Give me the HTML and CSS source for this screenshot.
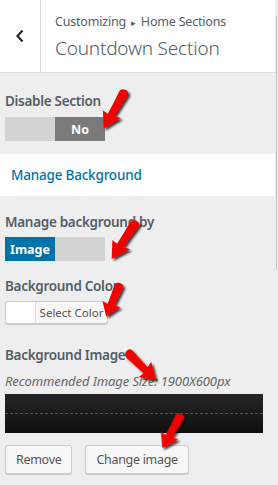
FILE: index.html
```html
<!DOCTYPE html>
<html lang="en">
<head>
  <meta charset="UTF-8">
  <title>Countdown Section</title>
  <link rel="stylesheet" href="styles.css">
</head>
<body>
  <div class="panel">
    <div class="panel-head">
      <button class="back" aria-label="Back">
        <svg width="10" height="14" viewBox="0 0 10 14"><path d="M7.5 1.5 L2.5 7 L7.5 12.5" fill="none" stroke="#23282d" stroke-width="2.2"/></svg>
      </button>
      <div class="head-text">
        <div class="crumb">Customizing <span class="tri">&#9656;</span> Home Sections</div>
        <div class="title">Countdown Section</div>
      </div>
    </div>

    <div class="control first">
      <div class="label">Disable Section</div>
      <div class="switch">
        <span class="half off"></span>
        <span class="half grey">No</span>
      </div>
    </div>

    <div class="band">Manage Background</div>

    <div class="control mb">
      <div class="label">Manage background by</div>
      <div class="switch">
        <span class="half blue">Image</span>
        <span class="half off"></span>
      </div>
    </div>

    <div class="control bc">
      <div class="label">Background Color</div>
      <div class="picker">
        <span class="swatch"></span>
        <span class="pick-text">Select Color</span>
      </div>
    </div>

    <div class="control bi">
      <div class="label">Background Image</div>
      <div class="desc">Recommended Image Size: 1900X600px</div>
      <div class="preview"><div class="dash"></div></div>
      <div class="actions">
        <button class="btn">Remove</button>
        <button class="btn">Change image</button>
      </div>
    </div>
  </div>
  <div class="scroll"><div class="thumb"></div></div>

  <svg class="marks" width="278" height="485" viewBox="0 0 278 485">
    <defs>
      <filter id="shade" x="-50%" y="-50%" width="200%" height="200%">
        <feDropShadow dx="2" dy="2" stdDeviation="1.2" flood-color="#000" flood-opacity="0.75"/>
      </filter>
      <path id="arrow" d="M-4.5 2 C-4.5 -3.5 5 -4 5 1 C4.5 10 4 17 3.8 24.5 L10.5 23 L0.5 40 L-9.5 25 L-3.4 25.8 C-3.5 18 -4 10 -4.5 2 Z"/>
    </defs>
    <g fill="#f40000" filter="url(#shade)">
      <use href="#arrow" transform="translate(124 92) rotate(29.6) scale(0.98 1.05)"/>
      <use href="#arrow" transform="translate(135 223) rotate(33.7) scale(0.98 1.07)"/>
      <use href="#arrow" transform="translate(119 285) rotate(22.8) scale(0.95 0.85)"/>
      <use href="#arrow" transform="translate(128 353) rotate(-45) scale(0.98 0.98)"/>
      <use href="#arrow" transform="translate(180 416) rotate(29.4) scale(0.95 0.92)"/>
    </g>
  </svg>
</body>
</html>
```

FILE: styles.css
```css
* {
  box-sizing: border-box;
}

body {
  margin: 0;
  width: 278px;
  height: 485px;
  overflow: hidden;
  background: #eee;
  font-family: "Noto Sans", "Open Sans", sans-serif;
  color: #555d66;
  display: flex;
  position: relative;
}

.panel {
  width: 275px;
  display: flex;
  flex-direction: column;
}

.panel-head {
  height: 73px;
  background: #fff;
  border-bottom: 1px solid #ddd;
  display: flex;
}

.back {
  width: 41px;
  border: 0;
  border-right: 1px solid #ddd;
  background: #fff;
  padding: 0;
  display: flex;
  align-items: center;
  justify-content: center;
}

.head-text {
  padding: 13px 0 0 14px;
}

.crumb {
  font-size: 12.5px;
  line-height: 18px;
  color: #555d66;
  letter-spacing: -0.2px;
}

.crumb .tri {
  font-size: 9px;
  margin: 0 2px;
}

.title {
  font-size: 19px;
  font-weight: 300;
  line-height: 26px;
  margin-top: 3px;
  color: #555d66;
  letter-spacing: -0.2px;
}

.control {
  padding: 0 5px;
}

.label {
  font-size: 13.5px;
  font-weight: 600;
  line-height: 20px;
  letter-spacing: -0.3px;
}

.first {
  margin-top: 18px;
}

.switch {
  display: flex;
  width: 100px;
  height: 24px;
  margin-top: 6px;
}

.half {
  width: 50px;
  display: flex;
  align-items: center;
  justify-content: center;
  color: #fff;
  font-size: 12.5px;
  font-weight: 700;
}

.off { background: #d3d3d3; }
.grey { background: #7a7a7a; }
.blue { background: #0073aa; }

.band {
  margin-top: 13px;
  height: 42px;
  background: #fff;
  color: #0073aa;
  font-size: 13.5px;
  font-weight: 500;
  line-height: 42px;
  padding-left: 11px;
  letter-spacing: -0.2px;
}

.mb {
  margin-top: 16px;
}

.mb .switch {
  margin-top: 5px;
}

.bc {
  margin-top: 15px;
}

.picker {
  margin-top: 5px;
  width: 103px;
  height: 23px;
  display: flex;
  border: 1px solid #ccc;
  border-radius: 3px;
  background: #f7f7f7;
  box-shadow: 0 1px 0 #ccc;
  overflow: hidden;
}

.swatch {
  width: 30px;
  background: #fff;
  border-right: 1px solid #ddd;
}

.pick-text {
  flex: 1;
  font-size: 11.5px;
  line-height: 21px;
  text-align: center;
  color: #555;
}

.bi {
  margin-top: 21px;
}

.desc {
  margin-top: 7px;
  font-size: 13px;
  font-style: italic;
  line-height: 18px;
  color: #666;
  letter-spacing: -0.1px;
}

.preview {
  margin-top: 4px;
  width: 258px;
  height: 39px;
  background: linear-gradient(#252525, #0f0f0f);
  display: flex;
  align-items: center;
}

.dash {
  width: 100%;
  border-top: 1px dashed #555;
}

.actions {
  margin-top: 12px;
  display: flex;
  gap: 13px;
}

.btn {
  height: 29px;
  padding: 0 10px;
  border: 1px solid #ccc;
  border-radius: 3px;
  background: #f7f7f7;
  box-shadow: 0 1px 0 #ccc;
  font-family: inherit;
  font-size: 12.5px;
  letter-spacing: -0.3px;
  color: #555;
}

.scroll {
  width: 3px;
  position: relative;
}

.thumb {
  margin: 16px 0 0 1px;
  width: 1px;
  height: 254px;
  background: #c1c1c1;
}

.marks {
  position: absolute;
  left: 0;
  top: 0;
  pointer-events: none;
}
```
